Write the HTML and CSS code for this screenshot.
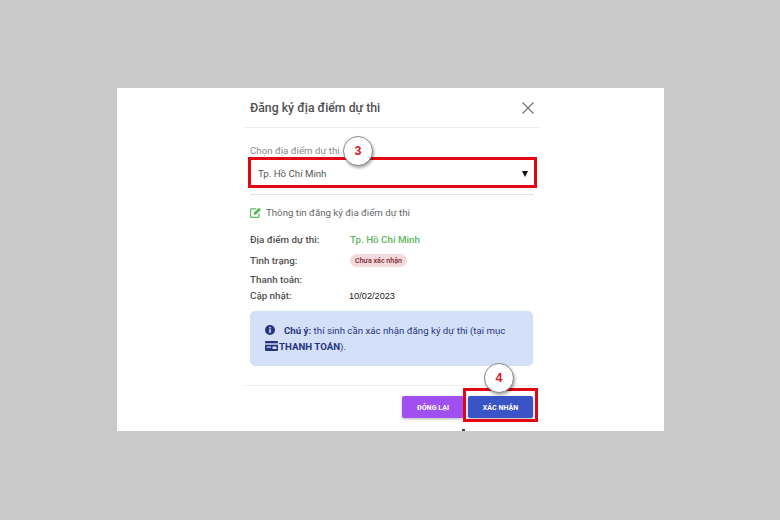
FILE: index.html
```html
<!DOCTYPE html>
<html lang="vi">
<head>
<meta charset="utf-8">
<title>Đăng ký địa điểm dự thi</title>
<link rel="stylesheet" href="styles.css">
</head>
<body>
<main class="sheet">
  <section class="dialog">
    <header class="head">
      <h1 class="title">Đăng ký địa điểm dự thi</h1>
      <svg class="close" width="12" height="12" viewBox="0 0 12 12"><path d="M.5.5l11 11M11.500.5l-11 11" stroke="#6f6f6f" stroke-width="1.100" fill="none"/></svg>
    </header>
    <div class="field">
      <div class="label">Chọn địa điểm dự thi</div>
      <div class="select"><span>Tp. Hồ Chí Minh</span><span class="caret"></span></div>
    </div>
    <div class="body">
      <div class="subhead">
        <svg width="12" height="11" viewBox="0 0 12 11"><path d="M9 6.500V9.500a.8.800 0 0 1-.8.800H1.300a.8.800 0 0 1-.8-.8V2.700a.8.800 0 0 1 .8-.8H6" stroke="#5cb85c" stroke-width="1.300" fill="none"/><path d="M4 5.500L9 .8l2 2-4.800 4.800-2.400.4z" fill="#5cb85c"/></svg>
        <span>Thông tin đăng ký địa điểm dự thi</span>
      </div>
      <dl class="rows">
        <div class="row r1"><dt>Địa điểm dự thi:</dt><dd class="place">Tp. Hồ Chí Minh</dd></div>
        <div class="row r2"><dt>Tình trạng:</dt><dd><span class="chip">Chưa xác nhận</span></dd></div>
        <div class="row r3"><dt>Thanh toán:</dt><dd></dd></div>
        <div class="row r4"><dt>Cập nhật:</dt><dd class="date">10/02/2023</dd></div>
      </dl>
      <div class="note">
        <p class="line"><svg class="info" width="10" height="10" viewBox="0 0 10 10"><circle cx="5" cy="5" r="5" fill="#26357f"/><rect x="4.200" y="4.200" width="1.600" height="3.600" fill="#d4e0f8"/><rect x="4.200" y="2" width="1.600" height="1.500" fill="#d4e0f8"/></svg><b>Chú ý:</b> thí sinh cần xác nhận đăng ký dự thi (tại mục</p>
        <p class="line"><svg class="card" width="13" height="10" viewBox="0 0 13 10"><rect width="13" height="10" rx="1" fill="#26357f"/><rect y="2.300" width="13" height="1.400" fill="#d4e0f8"/><rect x="1.500" y="5.500" width="4.500" height="1.200" fill="#d4e0f8"/><rect x="7.500" y="5.500" width="4" height="2.500" fill="#d4e0f8"/></svg><b>THANH TOÁN</b>).</p>
      </div>
    </div>
    <footer class="foot">
      <button class="btn purple">ĐÓNG LẠI</button>
      <button class="btn blue">XÁC NHẬN</button>
    </footer>
  </section>
  <div class="mark box3"></div>
  <div class="mark box4"></div>
  <div class="bubble b3">3</div>
  <div class="bubble b4">4</div>
  <div class="speck"></div>
</main>
</body>
</html>
```

FILE: styles.css
```css
html, body { margin: 0; height: 100%; }
body {
  background: #c9c9c9;
  font-family: Roboto, "Noto Sans", sans-serif;
  color: #4a4a4a;
  overflow: hidden;
  padding-top: 88px;
  box-sizing: border-box;
}
.sheet {
  position: relative;
  width: 547px;
  height: 343px;
  box-sizing: border-box;
  margin-left: 117px;
  padding-left: 127px;
  background: #fff;
  display: flex;
}
.dialog {
  width: 296px;
  display: flex;
  flex-direction: column;
}
.head {
  height: 40px;
  box-sizing: border-box;
  padding: 0 6px;
  display: flex;
  align-items: center;
  justify-content: space-between;
  border-bottom: 1px solid #ececec;
}
.title { margin: 0; font-size: 12.300px; font-weight: 500; color: #505050; line-height: 40px; }
.field {
  margin: 0 6px;
  padding-top: 16px;
  height: 67px;
  box-sizing: border-box;
  border-bottom: 1px solid #e4e4e4;
}
.label { font-size: 9.700px; color: #8a8a8a; line-height: 13px; height: 18px; }
.select {
  height: 23px;
  display: flex;
  align-items: center;
  justify-content: space-between;
  padding: 0 6px 0 8px;
  font-size: 9.700px;
  color: #555;
}
.caret {
  width: 0; height: 0;
  border-left: 3px solid transparent;
  border-right: 3px solid transparent;
  border-top: 6px solid #111;
}
.body { padding: 0 7px 0 6px; flex: 1; border-bottom: 1px solid #efefef; }
.subhead {
  display: flex;
  align-items: center;
  gap: 4px;
  height: 34px;
  font-size: 9.700px;
  color: #666;
}
.rows { margin: 0; height: 72px; }
.row { display: flex; align-items: center; font-size: 9.800px; }
.row dt { width: 99px; font-weight: 500; color: #505050; flex: none; }
.row dd { margin: 0; }
.r1 { height: 21px; }
.r2 { height: 20px; }
.r3 { height: 19px; }
.r4 { height: 13px; }
.row .place { color: #5cb85c; font-weight: 500; margin-left: 1px; }
.date { font-family: "Liberation Sans", sans-serif; font-size: 9.200px; color: #222; }
.chip {
  display: inline-block;
  background: #f5dadd;
  color: #7a1f2c;
  font-size: 7.100px;
  font-weight: 500;
  line-height: 13px;
  padding: 0 5px;
  margin-left: 1px;
  border-radius: 6.500px;
}
.note {
  margin-top: 10px;
  height: 55px;
  box-sizing: border-box;
  padding: 12px 10px 0 15px;
  background: #d4e0f8;
  border-radius: 5px;
  color: #26357f;
  font-size: 9.700px;
  line-height: 16px;
}
.line { margin: 0; white-space: nowrap; }
.line b { font-weight: 700; }
.info { vertical-align: -1px; margin-right: 9px; }
.card { vertical-align: -1px; margin-right: 1px; }
.foot {
  height: 45px;
  box-sizing: border-box;
  padding: 10px 7px 0 0;
  display: flex;
  justify-content: flex-end;
  gap: 4px;
}
.btn {
  height: 22px;
  border: 0;
  border-radius: 2px;
  color: #fff;
  font-family: Roboto, sans-serif;
  font-size: 7.100px;
  font-weight: 700;
  padding: 0;
  box-shadow: 0 1px 3px rgba(0,0,0,.3);
}
.purple { width: 62px; background: #a04ff0; }
.blue { width: 65px; background: #3a54c8; }
.mark { position: absolute; border: 3px solid #e30613; box-sizing: border-box; }
.box3 { left: 131px; top: 69px; width: 289px; height: 31px; }
.box4 { left: 346px; top: 300px; width: 75px; height: 34px; }
.bubble {
  position: absolute;
  width: 30px; height: 30px;
  box-sizing: border-box;
  border-radius: 50%;
  background: #fff;
  border: 1px solid #8a8a8a;
  box-shadow: 1px 2px 3px rgba(0,0,0,.35);
  color: #d9161f;
  font-family: "Liberation Sans", sans-serif;
  font-weight: 700;
  font-size: 12.500px;
  display: flex;
  align-items: center;
  justify-content: center;
}
.b3 { left: 226px; top: 48px; }
.b4 { left: 367px; top: 275px; }
.speck { position: absolute; left: 345px; top: 341px; width: 3px; height: 2px; background: #444; }
```
